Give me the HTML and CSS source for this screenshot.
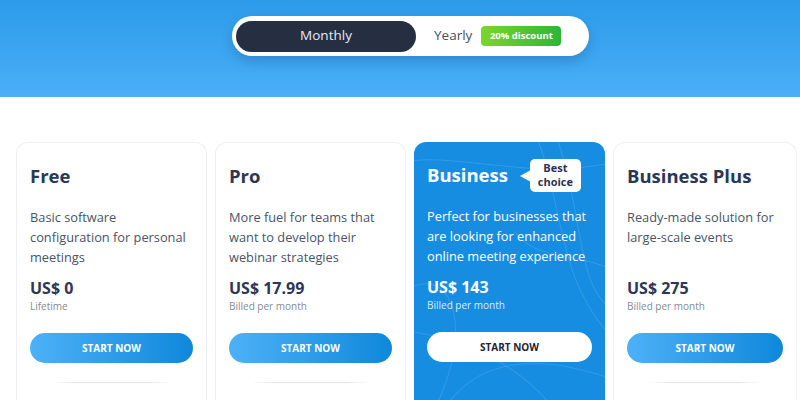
FILE: index.html
```html
<!DOCTYPE html>
<html>
<head>
	<title>pricing</title>
	<meta charset="utf-8"/>
	<link rel="stylesheet" href="styles.css">
</head>
<body>

<div class="top">
	<div class="switch">
		<span class="tab active">Monthly</span>
		<span class="tab">Yearly <em class="off">20% discount</em></span>
	</div>
</div>

<div class="plans">
	<div class="plan">
		<h2>Free</h2>
		<p class="desc">Basic software configuration for personal meetings</p>
		<div class="price">US$ 0</div>
		<div class="sub">Lifetime</div>
		<button>START NOW</button>
		<div class="rule"></div>
	</div>
	<div class="plan">
		<h2>Pro</h2>
		<p class="desc">More fuel for teams that want to develop their webinar strategies</p>
		<div class="price">US$ 17.99</div>
		<div class="sub">Billed per month</div>
		<button>START NOW</button>
		<div class="rule"></div>
	</div>
	<div class="plan best">
		<svg class="waves" viewBox="0 0 190 260" preserveAspectRatio="none">
			<path d="M-10 20 C 40 10, 120 40, 200 20"/>
			<path d="M120 -10 C 150 60, 140 140, 200 200"/>
			<path d="M140 -10 C 170 70, 160 150, 200 170"/>
			<path d="M-10 150 C 40 120, 60 190, 20 270"/>
			<path d="M-10 190 C 60 200, 110 230, 140 270"/>
			<path d="M30 270 C 60 220, 120 210, 200 240"/>
			<path d="M100 90 C 120 120, 160 110, 200 130"/>
		</svg>
		<div class="head">
			<h2>Business</h2>
			<span class="tag">Best<br>choice</span>
		</div>
		<p class="desc">Perfect for businesses that are looking for enhanced online meeting experience</p>
		<div class="price">US$ 143</div>
		<div class="sub">Billed per month</div>
		<button>START NOW</button>
	</div>
	<div class="plan">
		<h2>Business Plus</h2>
		<p class="desc">Ready-made solution for large-scale events</p>
		<div class="price">US$ 275</div>
		<div class="sub">Billed per month</div>
		<button>START NOW</button>
		<div class="rule"></div>
	</div>
</div>

</body>
</html>
```

FILE: styles.css
```css
* {
	margin: 0px;
	padding: 0px;
	box-sizing: border-box;
}

body {
	width: 800px;
	height: 400px;
	overflow: hidden;
	background-color: #ffffff;
	font-family: "Open Sans", "Noto Sans", sans-serif;
	color: #2b3756;
}

.top {
	height: 97px;
	padding-top: 16px;
	background: linear-gradient(180deg, #2c9bea 0%, #4aaff7 100%);
	display: flex;
	justify-content: center;
}
	.switch {
		width: 357px;
		height: 40px;
		margin-left: 21px;
		padding: 4px;
		display: flex;
		align-items: center;
		background-color: #ffffff;
		border-radius: 20px;
		box-shadow: 0 6px 12px rgba(20, 60, 110, 0.25);
	}
		.tab {
			font-size: 13.5px;
			line-height: 18px;
			color: #4c515e;
			display: flex;
			align-items: center;
			padding-left: 18px;
			margin-top: -2px;
		}
		.tab.active {
			width: 180px;
			height: 31px;
			padding: 0 0 3px 0;
			margin-top: 0;
			justify-content: center;
			color: #e6e9f0;
			background-color: #262f42;
			border-radius: 16px;
		}
		.off {
			font-style: normal;
			font-size: 9.5px;
			font-weight: 700;
			color: #ffffff;
			margin-left: 9px;
			margin-top: 2px;
			height: 20px;
			width: 80px;
			display: flex;
			align-items: center;
			justify-content: center;
			border-radius: 4px;
			background: linear-gradient(90deg, #7bd62a 0%, #2fb537 100%);
		}

.plans {
	display: grid;
	grid-template-columns: repeat(3, 191px) 184px;
	gap: 8px;
	padding: 45px 0 0 16px;
}
	.plan {
		position: relative;
		height: 258px;
		padding: 19px 13px 0 13px;
		border: 1px solid #eceff4;
		border-bottom: none;
		border-radius: 12px 12px 0 0;
		background-color: #ffffff;
	}
		.plan h2 {
			font-size: 18.5px;
			line-height: 28px;
			font-weight: 700;
			color: #2b3756;
		}
		.desc {
			margin-top: 17px;
			min-height: 60px;
			font-size: 12.8px;
			line-height: 20px;
			color: #4b5366;
		}
		.price {
			margin-top: 10px;
			font-size: 16px;
			line-height: 22px;
			font-weight: 700;
			color: #2b3756;
		}
		.sub {
			font-size: 10px;
			line-height: 15px;
			color: #858a95;
		}
		.plan button {
			display: block;
			width: 100%;
			height: 30px;
			margin-top: 19px;
			border: none;
			border-radius: 15px;
			font-family: inherit;
			font-size: 10px;
			font-weight: 700;
			color: #ffffff;
			background: linear-gradient(90deg, #4db1f7 0%, #0f88db 100%);
		}
		.rule {
			height: 1px;
			margin: 19px 22px 0 22px;
			background: linear-gradient(90deg, rgba(220, 224, 232, 0) 0%, #e2e5eb 20%, #e2e5eb 80%, rgba(220, 224, 232, 0) 100%);
		}

	.plan.best {
		border: none;
		background-color: #178de2;
		overflow: hidden;
	}
		.waves {
			position: absolute;
			left: 0;
			top: 0;
			width: 100%;
			height: 100%;
		}
			.waves path {
				fill: none;
				stroke: rgba(255, 255, 255, 0.12);
				stroke-width: 1;
			}
		.best .head,
		.best .desc,
		.best .price,
		.best .sub,
		.best button {
			position: relative;
		}
		.head {
			height: 28px;
			display: flex;
			align-items: center;
			gap: 22px;
		}
		.best h2,
		.best .desc,
		.best .price {
			color: #ffffff;
		}
		.best .sub {
			color: rgba(255, 255, 255, 0.85);
		}
		.tag {
			position: relative;
			flex-shrink: 0;
			width: 51px;
			height: 33px;
			padding-top: 2px;
			font-size: 11px;
			line-height: 14px;
			font-weight: 700;
			text-align: center;
			color: #2b3350;
			background-color: #ffffff;
			border-radius: 5px;
		}
			.tag::before {
				content: "";
				position: absolute;
				left: -10px;
				top: 11px;
				border-top: 6px solid transparent;
				border-bottom: 6px solid transparent;
				border-right: 11px solid #ffffff;
			}
		.best button {
			color: #1d2434;
			background: #ffffff;
		}
```
